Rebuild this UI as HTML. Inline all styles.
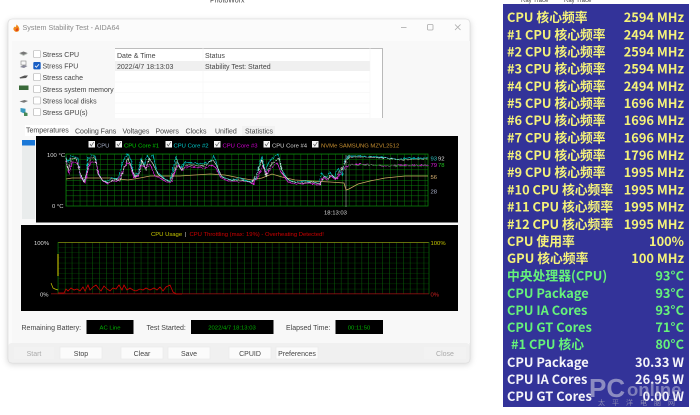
<!DOCTYPE html>
<html lang="zh"><head><meta charset="utf-8"><title>System Stability Test - AIDA64</title>
<style>
html,body{margin:0;padding:0;background:#fff;width:700px;height:415px;overflow:hidden}
svg{display:block}
.u{font-family:"Liberation Sans","Noto Sans CJK SC",sans-serif;font-size:7px;fill:#444}
.c{font-size:5.900px}
.p{font-family:"Noto Sans CJK SC","Liberation Sans",sans-serif;font-size:12.800px;font-weight:700}
.y{fill:#f4f27a}.g{fill:#66f27a}.w{fill:#f4f4f8}
.b{fill:#fbfbfb;stroke:#e8e8e8;stroke-width:.6}
</style></head><body>
<svg width="700" height="415" viewBox="0 0 700 415" xmlns="http://www.w3.org/2000/svg">
<defs>
<filter id="sh" x="-5%" y="-5%" width="110%" height="110%"><feGaussianBlur stdDeviation="3"/></filter>
<filter id="rough" x="-2%" y="-5%" width="104%" height="110%"><feTurbulence type="fractalNoise" baseFrequency=".45" numOctaves="2" seed="4"/><feDisplacementMap in="SourceGraphic" scale="3"/></filter>
<pattern id="g1" width="6.900" height="5.200" patternUnits="userSpaceOnUse" x="66" y="154"><path d="M0 0H6.900M0 0V5.200" stroke="#0a820a" stroke-width=".9" fill="none"/></pattern>
<pattern id="g2" width="6.900" height="5.200" patternUnits="userSpaceOnUse" x="58" y="242"><path d="M0 0H6.900" stroke="#044c04" stroke-width=".7" fill="none"/><path d="M0 0V5.200" stroke="#086a08" stroke-width=".9" fill="none"/></pattern>
</defs>
<rect width="700" height="415" fill="#fff"/>
<text x="210" y="2.500" class="u" fill="#555">PhotoWorx</text>
<text x="521" y="2" class="u" style="font-size:6px">Ray Trace</text><text x="564" y="2" class="u" style="font-size:6px">Ray Trace</text>

<!-- window -->
<rect x="7" y="20" width="464" height="345" rx="5" fill="#888" opacity=".3" filter="url(#sh)"/>
<rect x="8" y="19" width="462" height="344" rx="4" fill="#fbfbfb" stroke="#d6d6d6" stroke-width=".6"/>
<rect x="12" y="41" width="458" height="302" fill="#f8f8f8"/>
<rect x="8.500" y="343" width="461" height="19.500" rx="3" fill="#f0f0f0"/>
<path d="M14.500 31c-2-2-1-3.500 .5-4.500 0 1 1 1 1.500-2 2 1.500 3.500 4 2.500 6-.5 1.500-3.500 2-4.500 .5z" fill="#f08a1c"/>
<path d="M15.500 30.500c0-1.500 1.500-1.500 1.500-3 1 1 1.500 2 1 3-.5 .8-2 .8-2.500 0z" fill="#e0421a"/>
<text x="22.500" y="30" class="u" style="font-size:7.200px;fill:#8a8a8a">System Stability Test - AIDA64</text>
<path d="M401 27.500h5.500" stroke="#aaa" stroke-width=".8"/>
<rect x="427.500" y="24.500" width="5.500" height="5.500" rx="1" fill="none" stroke="#aaa" stroke-width=".8"/>
<path d="M455 24.500l5.500 5.500M460.500 24.500l-5.500 5.500" stroke="#aaa" stroke-width=".8"/>

<!-- stress list -->
<g fill="#fff" stroke="#aaa" stroke-width=".6">
<rect x="33.500" y="50.500" width="7" height="7" rx="1"/><rect x="33.500" y="73.500" width="7" height="7" rx="1"/>
<rect x="33.500" y="85.500" width="7" height="7" rx="1"/><rect x="33.500" y="97" width="7" height="7" rx="1"/><rect x="33.500" y="108.500" width="7" height="7" rx="1"/>
</g>
<rect x="33.300" y="62" width="7.400" height="7.400" rx="1" fill="#1a5fc4"/>
<path d="M35 65.800l1.400 1.500 2.600-3" stroke="#fff" stroke-width=".8" fill="none"/>
<g class="u"><text x="42.500" y="57">Stress CPU</text><text x="42.500" y="68.500">Stress FPU</text><text x="42.500" y="80">Stress cache</text><text x="42.500" y="92">Stress system memory</text><text x="42.500" y="103.500">Stress local disks</text><text x="42.500" y="115">Stress GPU(s)</text></g>
<path d="M19.500 53l4-1.500 4 1.500-4 2z" fill="#777"/><path d="M19.500 53.500l4 2 4-2" stroke="#9a9" stroke-width=".5" fill="none"/>
<path d="M20 67l3.500-2 4 1-3.500 2z" fill="#889"/><rect x="21" y="61" width="5" height="4" fill="none" stroke="#888" stroke-width=".6"/>
<path d="M19.500 77.500l5-2 3.500 0-2 2.500-6 .5z" fill="#555"/>
<rect x="19" y="85.500" width="9.500" height="4.500" fill="#3a6a3a"/>
<path d="M19.500 101.500l5-1.500 3.500 1-4 1.800z" fill="#777"/>
<path d="M20.500 108l5 .8v5l-3-1-2-1z" fill="#3a9ac0"/><path d="M24 112l3.500 1v3h-3.500z" fill="#4a8a58"/>

<rect x="115" y="48" width="268" height="70" fill="#fff"/>
<path d="M115 48.500H382.500V118" fill="none" stroke="#a8a8a8" stroke-width=".8"/>
<rect x="115" y="61" width="255" height="10" fill="#f0f0f0"/>
<path d="M115 82h255M115 92.500h255M115 103h255M115 113.500h255M203 48v70M370 48v70" stroke="#f4f4f4" stroke-width=".6"/>
<g class="u"><text x="117" y="58">Date &amp; Time</text><text x="205" y="69">Stability Test: Started</text><text x="205" y="58">Status</text><text x="117" y="69">2022/4/7 18:13:03</text></g>

<!-- tabs -->
<rect x="25" y="125" width="45" height="11" fill="#fff"/>
<rect x="242" y="126" width="33" height="10" fill="#f2f2f2"/>
<g class="u"><text x="26" y="132.500">Temperatures</text><text x="75" y="133.500">Cooling Fans</text><text x="122.500" y="133.500">Voltages</text><text x="155.500" y="133.500">Powers</text><text x="185.500" y="133.500">Clocks</text><text x="215" y="133.500">Unified</text><text x="245" y="133.500">Statistics</text></g>

<!-- scrollbar -->
<rect x="22" y="140" width="13" height="79" fill="#e9ecec"/><rect x="22" y="140" width="13" height="5.500" fill="#1a78d8"/>

<!-- temperature chart -->
<rect x="36" y="136" width="422" height="86.500" fill="#000"/>
<rect x="66" y="154" width="362" height="52" fill="url(#g1)"/>
<rect x="66" y="154" width="362" height="52" fill="none" stroke="#0a820a" stroke-width=".8"/>
<g fill="#f4f4f4"><rect x="88.500" y="141" width="6.500" height="6.500"/><rect x="115.500" y="141" width="6.500" height="6.500"/><rect x="165.500" y="141" width="6.500" height="6.500"/><rect x="214" y="141" width="6.500" height="6.500"/><rect x="263.500" y="141" width="6.500" height="6.500"/><rect x="312" y="141" width="6.500" height="6.500"/></g>
<g stroke="#555" stroke-width=".7" fill="none"><path d="M90 144l1.300 2 2.500-4M117 144l1.300 2 2.500-4M167 144l1.300 2 2.500-4M215.500 144l1.300 2 2.500-4M265 144l1.300 2 2.500-4M313.500 144l1.300 2 2.500-4"/></g>
<g class="u c">
<text x="97" y="147.500" style="fill:#a8b0c8">CPU</text><text x="124" y="147.500" style="fill:#00d000">CPU Core #1</text><text x="173.500" y="147.500" style="fill:#00c8c8">CPU Core #2</text><text x="222.500" y="147.500" style="fill:#d000d0">CPU Core #3</text><text x="272" y="147.500" style="fill:#d8d8d8">CPU Core #4</text><text x="321" y="147.500" style="fill:#c89030">NVMe SAMSUNG MZVL2512</text>
<text x="47" y="157" style="fill:#ddd">100 °C</text><text x="52" y="208" style="fill:#ddd">0 °C</text>
<text x="324" y="214.500" style="fill:#ddd">18:13:03</text>
<text x="430.500" y="160.500" style="fill:#30c8c8">93</text><text x="438" y="160.500" style="fill:#ddd">92</text>
<text x="430.500" y="167" style="fill:#e020e0">79</text><text x="438" y="167" style="fill:#20c020">78</text>
<text x="430.500" y="179" style="fill:#d8b070">56</text><text x="430.500" y="193.500" style="fill:#a8b0c8">28</text>
</g>
<path d="M346 155V207" stroke="#c8d0c8" stroke-width=".7" opacity=".75"/>
<polyline fill="none" stroke="#c8a860" stroke-width=".8" points="66,179 72,178 80,178 90,178 100,178 110,178 118,179 128,180 140,178 150,176 165,176 180,176 195,175 210,174 225,175 240,178 252,180 262,178 272,174 282,177 295,180 310,181 330,182 344,183 346,190 349,189 358,184 370,181 385,178 405,176 428,176"/>
<g filter="url(#rough)">
<polyline fill="none" stroke="#00c8c8" stroke-width=".7" points="66,157 68,162 71,156 75,157 78,158 80,175 84,181 86,175 88,158 92,155 95,156 98,172 102,180 107,182 112,178 118,179 122,164 125,157 128,154 131,160 134,176 138,173 141,158 144,166 147,155 150,160 153,155 157,172 162,176 166,180 170,181 174,166 176,156 178,165 181,168 185,162 190,163 195,163 200,164 205,163 210,162 214,156 216,162 220,176 226,178 232,180 240,178 250,182 255,180 258,170 262,156 265,172 269,162 275,156 278,154 282,170 288,180 295,182 305,181 318,183 322,173 325,178 330,172 334,178 338,168 342,175 345,160 347,158 349,156 360,156 380,157 395,159 410,158 428,158"/>
<polyline fill="none" stroke="#e020e0" stroke-width=".8" points="66,160 69,174 72,162 78,163 81,178 85,183 88,170 91,162 96,162 99,175 103,181 108,184 113,181 118,181 123,170 127,163 130,164 134,178 138,176 142,165 146,168 150,164 155,176 160,178 166,182 171,183 175,172 178,165 182,170 187,167 195,167 205,168 212,165 216,168 221,178 228,181 236,182 246,181 253,184 258,176 263,166 267,174 271,168 277,163 281,172 288,182 297,184 308,183 319,185 323,177 327,180 331,176 336,180 340,174 345,168 349,165 360,164 385,166 405,165 428,165"/>
<polyline fill="none" stroke="#e8f0e8" stroke-width=".6" points="66,158 68,171 71,159 76,158 80,172 84,182 87,172 90,158 95,158 98,174 103,181 109,183 115,179 120,181 124,168 128,158 131,166 135,177 139,174 142,160 146,170 149,158 153,164 158,174 164,179 170,182 175,170 177,160 181,170 186,165 193,165 204,166 213,160 217,166 222,177 230,180 242,180 252,183 257,174 262,160 266,176 270,166 276,160 279,158 283,174 290,181 300,183 312,182 320,184 324,176 328,179 332,175 336,179 340,171 345,163 348,158"/>
<polyline fill="none" stroke="#d8d8d8" stroke-width=".6" points="345,162 349,157 365,157 385,158 400,160 415,159 428,159"/>
<polyline fill="none" stroke="#10c010" stroke-width=".6" points="349,165 370,165 395,166 428,166"/>
</g>

<!-- usage chart -->
<rect x="21" y="225" width="437" height="86" fill="#000"/>
<rect x="58" y="242" width="371" height="52" fill="url(#g2)"/>
<path d="M58 242.500H429" stroke="#8a8a10" stroke-width=".8"/>
<path d="M51 293.800H429" stroke="#8a1010" stroke-width=".9"/>
<path d="M58 242V294M429 242V294" stroke="#086a08" stroke-width=".7"/>
<g class="u c">
<text x="151" y="236" style="fill:#c8c800">CPU Usage</text><text x="184.500" y="236" style="fill:#ddd">|</text><text x="189.500" y="236" style="fill:#d00000">CPU Throttling (max: 19%) - Overheating Detected!</text>
<text x="34" y="245" style="fill:#ddd">100%</text><text x="40" y="296.500" style="fill:#ddd">0%</text>
<text x="430.500" y="245" style="fill:#c8c800">100%</text><text x="430.500" y="296.500" style="fill:#d02020">0%</text>
</g>
<path d="M58 254V276" stroke="#c8c800" stroke-width="1.100"/>
<polyline fill="none" stroke="#c8c800" stroke-width=".7" points="51,283 53,288 55,289 58,290"/>
<polyline fill="none" stroke="#d00000" stroke-width=".8" points="58,293 64,293 66,289 68,291 71,288 74,290 77,289 80,291 83,287 85,291 88,285 90,290 93,287 96,285 99,289 101,291 104,286 107,289 110,291 113,288 116,289 119,285 122,290 124,285 127,290 130,288 133,290 136,291 140,289 143,290 146,288 150,290 154,288 157,290 160,287 163,291 166,287 170,285 173,292 176,294 182,294"/>

<!-- status -->
<g class="u"><text x="21.500" y="330">Remaining Battery:</text><text x="146.500" y="330">Test Started:</text><text x="286" y="330">Elapsed Time:</text></g>
<g fill="#000"><rect x="86.500" y="320" width="47" height="14"/><rect x="191" y="320" width="82.500" height="14"/><rect x="335.500" y="320" width="47.500" height="14"/></g>
<g class="u c" style="fill:#00b000;text-anchor:middle"><text x="110" y="329.500">AC Line</text><text x="232" y="329.500">2022/4/7 18:13:03</text><text x="359" y="329.500">00:11:50</text></g>

<!-- buttons -->
<rect class="b" x="60" y="347" width="42" height="12"/><rect class="b" x="121" y="347" width="42" height="12"/><rect class="b" x="168" y="347" width="42" height="12"/><rect class="b" x="229" y="347" width="42" height="12"/><rect class="b" x="276" y="347" width="42" height="12"/>
<rect x="14" y="347" width="40" height="12" fill="#f2f2f2"/><rect x="424" y="347" width="42" height="12" fill="#f2f2f2"/>
<g class="u" style="text-anchor:middle"><text x="34" y="356" style="fill:#aaa">Start</text><text x="81" y="356">Stop</text><text x="142" y="356">Clear</text><text x="189" y="356">Save</text><text x="250" y="356">CPUID</text><text x="297" y="356">Preferences</text><text x="445" y="356" style="fill:#aaa">Close</text></g>

<!-- right panel -->
<rect x="503" y="4" width="186" height="403" fill="#333399"/>
<g class="p">
<g class="y">
<text x="507" y="22">CPU 核心频率</text><text x="507" y="39.500">#1 CPU 核心频率</text><text x="507" y="56.500">#2 CPU 核心频率</text><text x="507" y="73.500">#3 CPU 核心频率</text><text x="507" y="91">#4 CPU 核心频率</text><text x="507" y="108">#5 CPU 核心频率</text><text x="507" y="125">#6 CPU 核心频率</text><text x="507" y="142.500">#7 CPU 核心频率</text><text x="507" y="160">#8 CPU 核心频率</text><text x="507" y="177">#9 CPU 核心频率</text><text x="507" y="194.500">#10 CPU 核心频率</text><text x="507" y="211.500">#11 CPU 核心频率</text><text x="507" y="229">#12 CPU 核心频率</text><text x="507" y="246">CPU 使用率</text><text x="507" y="263">GPU 核心频率</text>
<g text-anchor="end"><text x="684" y="22">2594 MHz</text><text x="684" y="39.500">2494 MHz</text><text x="684" y="56.500">2594 MHz</text><text x="684" y="73.500">2594 MHz</text><text x="684" y="91">2494 MHz</text><text x="684" y="108">1696 MHz</text><text x="684" y="125">1696 MHz</text><text x="684" y="142.500">1696 MHz</text><text x="684" y="160">1796 MHz</text><text x="684" y="177">1995 MHz</text><text x="684" y="194.500">1995 MHz</text><text x="684" y="211.500">1995 MHz</text><text x="684" y="229">1995 MHz</text><text x="684" y="246">100%</text><text x="684" y="263">100 MHz</text></g>
</g>
<g class="g">
<text x="507" y="280.500">中央处理器(CPU)</text><text x="507" y="298">CPU Package</text><text x="507" y="315">CPU IA Cores</text><text x="507" y="332">CPU GT Cores</text><text x="511" y="349">#1 CPU 核心</text>
<g text-anchor="end"><text x="684" y="280.500">93°C</text><text x="684" y="298">93°C</text><text x="684" y="315">93°C</text><text x="684" y="332">71°C</text><text x="684" y="349">80°C</text></g>
</g>
<g class="w">
<text x="507" y="367">CPU Package</text><text x="507" y="384">CPU IA Cores</text><text x="507" y="401">CPU GT Cores</text>
<g text-anchor="end"><text x="684" y="367">30.33 W</text><text x="684" y="384">26.95 W</text><text x="684" y="401">0.00 W</text></g>
</g>
</g>
<text x="589" y="397" font-family="Liberation Sans,sans-serif" font-weight="700" font-size="26" fill="#c8c8dc" opacity=".6">PC</text>
<text x="627" y="396" font-family="Liberation Sans,sans-serif" font-weight="700" font-size="18.500" fill="#c8c8dc" opacity=".5">online</text>
<text x="598" y="405" font-family="Noto Sans CJK SC,sans-serif" font-size="7" letter-spacing="7" fill="#aab" opacity=".7">太平洋电脑网</text>
</svg>
</body></html>
